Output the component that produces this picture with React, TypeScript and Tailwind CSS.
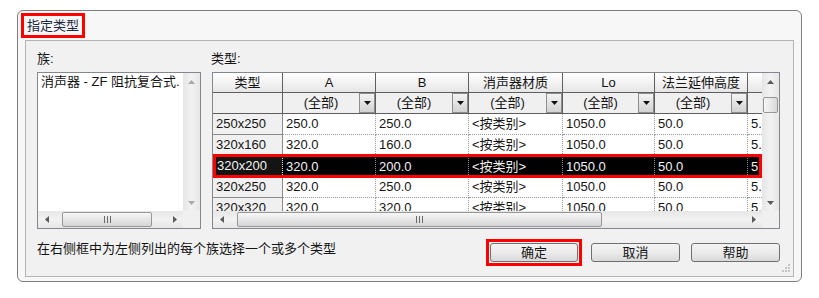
import React from 'react';

type Dir = 'up' | 'down' | 'left' | 'right';

function Tri({ dir, color = '#5a5a5a' }: { dir: Dir; color?: string }) {
  if (dir === 'up' || dir === 'down') {
    return (
      <svg width="7" height="4" viewBox="0 0 7 4">
        <polygon points={dir === 'up' ? '0,4 3.5,0 7,4' : '0,0 7,0 3.5,4'} fill={color} />
      </svg>
    );
  }
  return (
    <svg width="4" height="7" viewBox="0 0 4 7">
      <polygon points={dir === 'left' ? '4,0 4,7 0,3.5' : '0,0 0,7 4,3.5'} fill={color} />
    </svg>
  );
}

function Grip() {
  return (
    <div className="flex gap-[2px]">
      <span className="h-[7px] w-px bg-[#6a6a6a]" />
      <span className="h-[7px] w-px bg-[#6a6a6a]" />
      <span className="h-[7px] w-px bg-[#6a6a6a]" />
    </div>
  );
}

function VScroll({ thumb, dim }: { thumb?: boolean; dim?: boolean }) {
  const c = dim ? '#a8a8a8' : '#5a5a5a';
  return (
    <div className="flex w-[17px] shrink-0 flex-col bg-gradient-to-r from-[#e6e6e6] via-[#f2f2f2] to-[#e6e6e6]">
      <div className="flex h-[17px] items-center justify-center">
        <Tri dir="up" color={c} />
      </div>
      <div className="flex-1">
        {thumb && (
          <div className="mx-px mt-[7px] h-[16px] rounded-[2px] border border-[#979797] bg-gradient-to-r from-[#f7f7f7] to-[#d8d8d8]" />
        )}
      </div>
      <div className="flex h-[17px] items-center justify-center">
        <Tri dir="down" color={c} />
      </div>
    </div>
  );
}

function HScroll({ thumbClass }: { thumbClass: string }) {
  return (
    <div className="flex h-[17px] min-w-0 flex-1 bg-gradient-to-b from-[#e6e6e6] via-[#f2f2f2] to-[#e6e6e6]">
      <div className="flex w-[17px] shrink-0 items-center justify-center">
        <Tri dir="left" />
      </div>
      <div className="flex min-w-0 flex-1 py-px">
        <div
          className={`flex items-center justify-center rounded-[2px] border border-[#979797] bg-gradient-to-b from-[#f7f7f7] to-[#d6d6d6] ${thumbClass}`}
        >
          <Grip />
        </div>
      </div>
      <div className="flex w-[17px] shrink-0 items-center justify-center">
        <Tri dir="right" />
      </div>
    </div>
  );
}

const W = ['w-[70px]', 'w-[93px]', 'w-[93px]', 'w-[94px]', 'w-[92px]', 'w-[93px]', 'w-[60px]'];
const HEAD = ['类型', 'A', 'B', '消声器材质', 'Lo', '法兰延伸高度', ''];

const ROWS = [
  ['250x250', '250.0', '250.0', '<按类别>', '1050.0', '50.0', '5.0'],
  ['320x160', '320.0', '160.0', '<按类别>', '1050.0', '50.0', '5.0'],
  ['320x200', '320.0', '200.0', '<按类别>', '1050.0', '50.0', '5.0'],
  ['320x250', '320.0', '250.0', '<按类别>', '1050.0', '50.0', '5.0'],
  ['320x320', '320.0', '320.0', '<按类别>', '1050.0', '50.0', '5.0'],
];

function TypeGrid() {
  return (
    <div className="flex h-[157px] flex-col border border-[#828790] bg-white">
      <div className="flex min-h-0 flex-1">
        <div className="min-w-0 flex-1 overflow-hidden">
          {/* header */}
          <div className="flex h-[20px]">
            {HEAD.map((h, i) => (
              <div
                key={i}
                className={`${W[i]} shrink-0 border-b border-r border-[#5e5e5e] bg-gradient-to-b from-white to-[#e6e6e6] text-center leading-[19px]`}
              >
                {h}
              </div>
            ))}
          </div>
          {/* filter */}
          <div className="flex h-[21px]">
            {HEAD.map((_, i) => (
              <div
                key={i}
                className={`${W[i]} flex shrink-0 border-b border-r border-[#5e5e5e] bg-[#f0f0f0]`}
              >
                {i > 0 && i < 6 && (
                  <>
                    <span className="flex-1 text-center leading-[20px]">(全部)</span>
                    <span className="flex w-[16px] items-center justify-center border border-[#8d8d8d] bg-gradient-to-b from-[#f4f4f4] to-[#d2d2d2]">
                      <Tri dir="down" color="#111" />
                    </span>
                  </>
                )}
              </div>
            ))}
          </div>
          {/* data */}
          {ROWS.map((r, ri) => {
            const sel = ri === 2;
            return (
              <div key={ri} className={sel ? 'relative z-10 flex h-[21px] bg-black' : 'flex h-[21px]'}>
                {r.map((v, i) =>
                  i === 0 ? (
                    <div
                      key={i}
                      className={
                        sel
                          ? `${W[i]} shrink-0 border border-dotted border-[#dcdcdc] bg-[#141414] pl-[3px] leading-[18px] text-[#f2f2f2]`
                          : `${W[i]} shrink-0 border-b border-r border-[#8a8a8a] bg-[#f0f0f0] pl-[3px] leading-[20px]`
                      }
                    >
                      {v}
                    </div>
                  ) : (
                    <div
                      key={i}
                      className={
                        sel
                          ? `${W[i]} shrink-0 border-r border-dotted border-[#8a8a8a] pl-[3px] leading-[21px] text-[#f2f2f2]`
                          : `${W[i]} shrink-0 border-b border-r border-dotted border-[#9a9a9a] pl-[3px] leading-[20px]`
                      }
                    >
                      {v}
                    </div>
                  )
                )}
                {sel && (
                  <span className="pointer-events-none absolute -bottom-px -top-[2px] left-0 right-0 border-[3px] border-[#ff0000]" />
                )}
              </div>
            );
          })}
        </div>
        <VScroll thumb />
      </div>
      <div className="flex h-[17px]">
        <HScroll thumbClass="ml-[7px] w-[365px]" />
        <div className="w-[17px] shrink-0 bg-[#f0f0f0]" />
      </div>
    </div>
  );
}

function FamilyList() {
  return (
    <div className="flex h-[157px] flex-col border border-[#828790] bg-white">
      <div className="flex min-h-0 flex-1">
        <div className="min-w-0 flex-1 overflow-hidden whitespace-nowrap pl-[3px] leading-[17px]">
          消声器 - ZF 阻抗复合式.
        </div>
        <VScroll dim />
      </div>
      <div className="flex h-[17px]">
        <HScroll thumbClass="ml-[7px] w-[90px]" />
        <div className="w-[17px] shrink-0 bg-[#f0f0f0]" />
      </div>
    </div>
  );
}

function Btn({ label, className }: { label: string; className: string }) {
  return (
    <div
      className={`h-[19px] rounded-[3px] border border-[#707070] bg-gradient-to-b from-[#f3f3f3] via-[#ebebeb] to-[#d9d9d9] text-center leading-[17px] ${className}`}
    >
      {label}
    </div>
  );
}

export default function App() {
  return (
    <div className="h-[298px] w-[819px] overflow-hidden bg-white pl-[17px] pt-[10px] font-['Liberation_Sans','Noto_Sans_CJK_SC',sans-serif] text-[13px] text-[#141414]">
      <div className="flex h-[272px] w-[785px] flex-col rounded-[6px] border border-[#7d7d7d] bg-[#f7f7f7] px-[7px] pb-[4px]">
        <div className="flex h-[29px] items-start pt-[2px]">
          <span className="-ml-[4px] h-[25px] border-[3px] border-[#ff0000] px-[3px] leading-[19px] text-[#1c2740]">
            指定类型
          </span>
        </div>
        <div className="relative flex flex-1 flex-col border border-[#b4b4b4] bg-[#f1f1f1] pl-[11px] pr-[13px] pt-[9px]">
          <div className="flex gap-[11px]">
            <div className="w-[164px] shrink-0">
              <div className="h-[22px] leading-[17px]">族:</div>
              <FamilyList />
            </div>
            <div className="min-w-0 flex-1">
              <div className="-ml-px h-[22px] leading-[17px]">类型:</div>
              <TypeGrid />
            </div>
          </div>
          <div className="mt-[11px] flex items-start justify-between">
            <div className="leading-[17px]">在右侧框中为左侧列出的每个族选择一个或多个类型</div>
            <div className="-mt-px flex items-start">
              <div className="border-[3px] border-[#ff0000] p-px">
                <Btn label="确定" className="w-[88px]" />
              </div>
              <Btn label="取消" className="ml-[9px] mt-[4px] w-[89px]" />
              <Btn label="帮助" className="ml-[11px] mt-[4px] w-[89px]" />
            </div>
          </div>
          <svg className="absolute bottom-[4px] right-[3px]" width="9" height="9" viewBox="0 0 9 9">
            <rect x="7" y="1" width="2" height="2" fill="#c4c4c4" />
            <rect x="4" y="4" width="2" height="2" fill="#c4c4c4" />
            <rect x="7" y="4" width="2" height="2" fill="#c4c4c4" />
            <rect x="1" y="7" width="2" height="2" fill="#c4c4c4" />
            <rect x="4" y="7" width="2" height="2" fill="#c4c4c4" />
            <rect x="7" y="7" width="2" height="2" fill="#c4c4c4" />
          </svg>
        </div>
      </div>
    </div>
  );
}
